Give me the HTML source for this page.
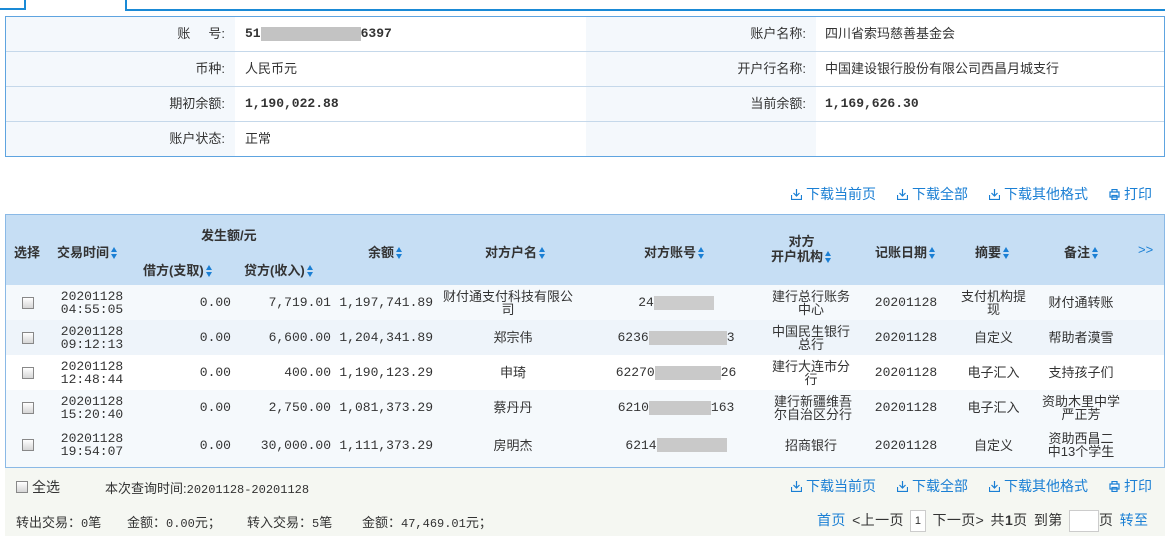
<!DOCTYPE html>
<html><head><meta charset="utf-8"><style>
*{margin:0;padding:0;box-sizing:border-box}
body{width:1165px;height:536px;background:#fff;font-family:"Liberation Sans","Noto Sans CJK SC",sans-serif;font-size:13px;color:#333;position:relative;overflow:hidden}
.a{position:absolute}
.mono{font-family:"Liberation Mono","Noto Sans CJK SC",monospace;font-size:12px}
.info{left:5px;top:16px;width:1160px;height:141px;border:1px solid #5ea4e0}
.info .r{position:absolute;left:0;width:1158px;height:35px;border-bottom:1px solid #c5d8ea}
.info .c{position:absolute;top:0;height:34px;line-height:34px}
.lb{background:#f4f8fc;text-align:right;padding-right:10px}
.hd{left:5px;top:214px;width:1160px;height:254px;border:1px solid #8ab9e6;border-bottom:none}
.th{position:absolute;font-weight:bold;color:#333;font-size:13px;text-align:center;white-space:nowrap}
.ar{display:inline-block;width:7px;height:13px;vertical-align:middle;margin-left:2px;position:relative}
.ar:before{content:"";position:absolute;left:0;top:0;border:3.5px solid transparent;border-bottom:5px solid #1a7fd4;border-top:0}
.ar:after{content:"";position:absolute;left:0;top:7px;border:3.5px solid transparent;border-top:5px solid #1a7fd4;border-bottom:0}
.row{position:absolute;left:0;width:1158px;height:35px}
.cell{position:absolute;top:0;height:35px;display:flex;align-items:center;justify-content:center;text-align:center;line-height:13px;font-size:13px}
.cb{width:12px;height:12px;border:1px solid #888;background:linear-gradient(#fff,#d6d6d6)}
.blur{display:inline-block;height:14px;background:#c9c9c9;vertical-align:middle}
.lk{color:#1a7fd4;font-size:14px}
.ic{display:inline-block;width:11px;height:11px;vertical-align:-1px;margin-right:4px}
.bv{font-weight:bold;font-size:13px}
</style></head><body>
<div class="a" style="left:0;top:0;width:26px;height:10px;border-right:2px solid #1a8ad6;border-bottom:2px solid #1a8ad6"></div>
<div class="a" style="left:125px;top:0;width:1040px;height:11px;border-left:2px solid #1a8ad6;border-bottom:2px solid #1a8ad6"></div>

<div class="a info">
 <div class="r" style="top:0"><div class="c lb" style="left:0;width:229px">账&nbsp;&nbsp;&nbsp;&nbsp;&nbsp;号:</div><div class="c mono bv" style="left:239px">51<span class="blur" style="width:100px;background:#c3c3c3"></span>6397</div><div class="c lb" style="left:580px;width:230px">账户名称:</div><div class="c" style="left:819px">四川省索玛慈善基金会</div></div>
 <div class="r" style="top:35px"><div class="c lb" style="left:0;width:229px">币种:</div><div class="c" style="left:239px">人民币元</div><div class="c lb" style="left:580px;width:230px">开户行名称:</div><div class="c" style="left:819px">中国建设银行股份有限公司西昌月城支行</div></div>
 <div class="r" style="top:70px"><div class="c lb" style="left:0;width:229px">期初余额:</div><div class="c mono bv" style="left:239px">1,190,022.88</div><div class="c lb" style="left:580px;width:230px">当前余额:</div><div class="c mono bv" style="left:819px">1,169,626.30</div></div>
 <div class="r" style="top:105px;border-bottom:none"><div class="c lb" style="left:0;width:229px">账户状态:</div><div class="c" style="left:239px">正常</div><div class="c lb" style="left:580px;width:230px;background:#f4f8fc"></div></div>
</div>

<div class="a lk" style="top:184px;left:791px">
<svg class="ic" viewBox="0 0 11 11"><path d="M5.5 0v7M2.5 4l3 3 3-3M0.5 6v4.5h10V6" fill="none" stroke="#1a7fd4" stroke-width="1.2"/></svg>下载当前页</div>
<div class="a lk" style="top:184px;left:897px"><svg class="ic" viewBox="0 0 11 11"><path d="M5.5 0v7M2.5 4l3 3 3-3M0.5 6v4.5h10V6" fill="none" stroke="#1a7fd4" stroke-width="1.2"/></svg>下载全部</div>
<div class="a lk" style="top:184px;left:989px"><svg class="ic" viewBox="0 0 11 11"><path d="M5.5 0v7M2.5 4l3 3 3-3M0.5 6v4.5h10V6" fill="none" stroke="#1a7fd4" stroke-width="1.2"/></svg>下载其他格式</div>
<div class="a lk" style="top:184px;left:1109px"><svg class="ic" viewBox="0 0 11 11"><path d="M3 3V0.5h5V3M1 3h9v5H1zM3 6.5h5v4H3z" fill="#fff" stroke="#1a7fd4" stroke-width="1.2"/></svg>打印</div>

<div class="a hd">
 <div style="position:absolute;left:0;top:0;width:1158px;height:71px;background:#c6def4"></div>
 <div class="th" style="left:8px;top:27px">选择</div>
 <div class="th" style="left:51px;top:27px">交易时间<i class="ar"></i></div>
 <div class="th" style="left:195px;top:10px">发生额/元</div>
 <div class="th" style="left:137px;top:45px">借方(支取)<i class="ar"></i></div>
 <div class="th" style="left:238px;top:45px">贷方(收入)<i class="ar"></i></div>
 <div class="th" style="left:362px;top:27px">余额<i class="ar"></i></div>
 <div class="th" style="left:479px;top:27px">对方户名<i class="ar"></i></div>
 <div class="th" style="left:638px;top:27px">对方账号<i class="ar"></i></div>
 <div class="th" style="left:765px;top:19px;line-height:15px">对方<br>开户机构<i class="ar"></i></div>
 <div class="th" style="left:869px;top:27px">记账日期<i class="ar"></i></div>
 <div class="th" style="left:969px;top:27px">摘要<i class="ar"></i></div>
 <div class="th" style="left:1058px;top:27px">备注<i class="ar"></i></div>
 <div class="th" style="left:1132px;top:27px;color:#1a7fd4;font-weight:normal">&gt;&gt;</div>
</div>

<div class="a" style="left:6px;top:285px;width:1158px;height:183px">
 <div class="row" style="top:0;background:#f5f9fc">
  <div class="cell" style="left:10px;width:24px"><span class="cb"></span></div>
  <div class="cell mono" style="left:46px;width:80px">20201128<br>04:55:05</div>
  <div class="cell mono" style="left:140px;width:85px;justify-content:flex-end">0.00</div>
  <div class="cell mono" style="left:240px;width:85px;justify-content:flex-end">7,719.01</div>
  <div class="cell mono" style="left:330px;width:97px;justify-content:flex-end">1,197,741.89</div>
  <div class="cell" style="left:437px;width:130px">财付通支付科技有限公司</div>
  <div class="cell mono" style="left:600px;width:140px">24<span class="blur" style="width:60px;background:#ccc"></span></div>
  <div class="cell" style="left:760px;width:90px">建行总行账务中心</div>
  <div class="cell mono" style="left:855px;width:90px">20201128</div>
  <div class="cell" style="left:950px;width:75px">支付机构提现</div>
  <div class="cell" style="left:1030px;width:90px">财付通转账</div>
 </div>
 <div class="row" style="top:35px;background:#eef4fa">
  <div class="cell" style="left:10px;width:24px"><span class="cb"></span></div>
  <div class="cell mono" style="left:46px;width:80px">20201128<br>09:12:13</div>
  <div class="cell mono" style="left:140px;width:85px;justify-content:flex-end">0.00</div>
  <div class="cell mono" style="left:240px;width:85px;justify-content:flex-end">6,600.00</div>
  <div class="cell mono" style="left:330px;width:97px;justify-content:flex-end">1,204,341.89</div>
  <div class="cell" style="left:437px;width:140px">郑宗伟</div>
  <div class="cell mono" style="left:600px;width:140px">6236<span class="blur" style="width:78px"></span>3</div>
  <div class="cell" style="left:760px;width:90px">中国民生银行总行</div>
  <div class="cell mono" style="left:855px;width:90px">20201128</div>
  <div class="cell" style="left:950px;width:75px">自定义</div>
  <div class="cell" style="left:1030px;width:90px">帮助者漠雪</div>
 </div>
 <div class="row" style="top:70px;background:#fff">
  <div class="cell" style="left:10px;width:24px"><span class="cb"></span></div>
  <div class="cell mono" style="left:46px;width:80px">20201128<br>12:48:44</div>
  <div class="cell mono" style="left:140px;width:85px;justify-content:flex-end">0.00</div>
  <div class="cell mono" style="left:240px;width:85px;justify-content:flex-end">400.00</div>
  <div class="cell mono" style="left:330px;width:97px;justify-content:flex-end">1,190,123.29</div>
  <div class="cell" style="left:437px;width:140px">申琦</div>
  <div class="cell mono" style="left:600px;width:140px">62270<span class="blur" style="width:66px"></span>26</div>
  <div class="cell" style="left:760px;width:90px">建行大连市分行</div>
  <div class="cell mono" style="left:855px;width:90px">20201128</div>
  <div class="cell" style="left:950px;width:75px">电子汇入</div>
  <div class="cell" style="left:1030px;width:90px">支持孩子们</div>
 </div>
 <div class="row" style="top:105px;background:#f5f9fc">
  <div class="cell" style="left:10px;width:24px"><span class="cb"></span></div>
  <div class="cell mono" style="left:46px;width:80px">20201128<br>15:20:40</div>
  <div class="cell mono" style="left:140px;width:85px;justify-content:flex-end">0.00</div>
  <div class="cell mono" style="left:240px;width:85px;justify-content:flex-end">2,750.00</div>
  <div class="cell mono" style="left:330px;width:97px;justify-content:flex-end">1,081,373.29</div>
  <div class="cell" style="left:437px;width:140px">蔡丹丹</div>
  <div class="cell mono" style="left:600px;width:140px">6210<span class="blur" style="width:62px"></span>163</div>
  <div class="cell" style="left:763px;width:88px">建行新疆维吾尔自治区分行</div>
  <div class="cell mono" style="left:855px;width:90px">20201128</div>
  <div class="cell" style="left:950px;width:75px">电子汇入</div>
  <div class="cell" style="left:1035px;width:80px">资助木里中学严正芳</div>
 </div>
 <div class="row" style="top:140px;height:43px;background:#f5f9fc">
  <div class="cell" style="left:10px;width:24px;height:40px"><span class="cb"></span></div>
  <div class="cell mono" style="left:46px;width:80px;height:40px">20201128<br>19:54:07</div>
  <div class="cell mono" style="left:140px;width:85px;justify-content:flex-end;height:40px">0.00</div>
  <div class="cell mono" style="left:240px;width:85px;justify-content:flex-end;height:40px">30,000.00</div>
  <div class="cell mono" style="left:330px;width:97px;justify-content:flex-end;height:40px">1,111,373.29</div>
  <div class="cell" style="left:437px;width:140px;height:40px">房明杰</div>
  <div class="cell mono" style="left:600px;width:140px;height:40px">6214<span class="blur" style="width:70px"></span></div>
  <div class="cell" style="left:760px;width:90px;height:40px">招商银行</div>
  <div class="cell mono" style="left:855px;width:90px;height:40px">20201128</div>
  <div class="cell" style="left:950px;width:75px;height:40px">自定义</div>
  <div class="cell" style="left:1040px;width:70px;height:40px">资助西昌二中13个学生</div>
 </div>
</div>

<div class="a" style="left:5px;top:467px;width:1160px;height:69px;background:#f5f7f2;border-top:1px solid #8ab9e6"></div>
<div class="a" style="left:16px;top:477px;font-size:14px"><span class="cb" style="display:inline-block;vertical-align:-1px;margin-right:4px"></span>全选</div>
<div class="a" style="left:105px;top:478px;font-size:13px">本次查询时间:<span class="mono">20201128-20201128</span></div>
<div class="a lk" style="top:476px;left:791px"><svg class="ic" viewBox="0 0 11 11"><path d="M5.5 0v7M2.5 4l3 3 3-3M0.5 6v4.5h10V6" fill="none" stroke="#1a7fd4" stroke-width="1.2"/></svg>下载当前页</div>
<div class="a lk" style="top:476px;left:897px"><svg class="ic" viewBox="0 0 11 11"><path d="M5.5 0v7M2.5 4l3 3 3-3M0.5 6v4.5h10V6" fill="none" stroke="#1a7fd4" stroke-width="1.2"/></svg>下载全部</div>
<div class="a lk" style="top:476px;left:989px"><svg class="ic" viewBox="0 0 11 11"><path d="M5.5 0v7M2.5 4l3 3 3-3M0.5 6v4.5h10V6" fill="none" stroke="#1a7fd4" stroke-width="1.2"/></svg>下载其他格式</div>
<div class="a lk" style="top:476px;left:1109px"><svg class="ic" viewBox="0 0 11 11"><path d="M3 3V0.5h5V3M1 3h9v5H1zM3 6.5h5v4H3z" fill="#fff" stroke="#1a7fd4" stroke-width="1.2"/></svg>打印</div>
<div class="a" style="left:16px;top:512px;font-size:13px;white-space:nowrap">
<span class="a" style="left:0">转出交易：<span class="mono">0</span>笔</span>
<span class="a" style="left:111px">金额：<span class="mono">0.00</span>元；</span>
<span class="a" style="left:231px">转入交易：<span class="mono">5</span>笔</span>
<span class="a" style="left:346px">金额：<span class="mono">47,469.01</span>元；</span>
</div>
<div class="a" style="left:817px;top:510px;font-size:14px;white-space:nowrap;word-spacing:2px;letter-spacing:0.4px"><span style="color:#1a7fd4">首页</span> &lt;上一页 <span style="display:inline-block;width:16px;height:22px;border:1px solid #ccc;background:#fff;text-align:center;font-size:11px;line-height:20px;vertical-align:middle">1</span> 下一页&gt; 共<b>1</b>页 到第 <span style="display:inline-block;width:30px;height:22px;border:1px solid #ccc;background:#fff;vertical-align:middle"></span>页 <span style="color:#1a7fd4">转至</span></div>
</body></html>
